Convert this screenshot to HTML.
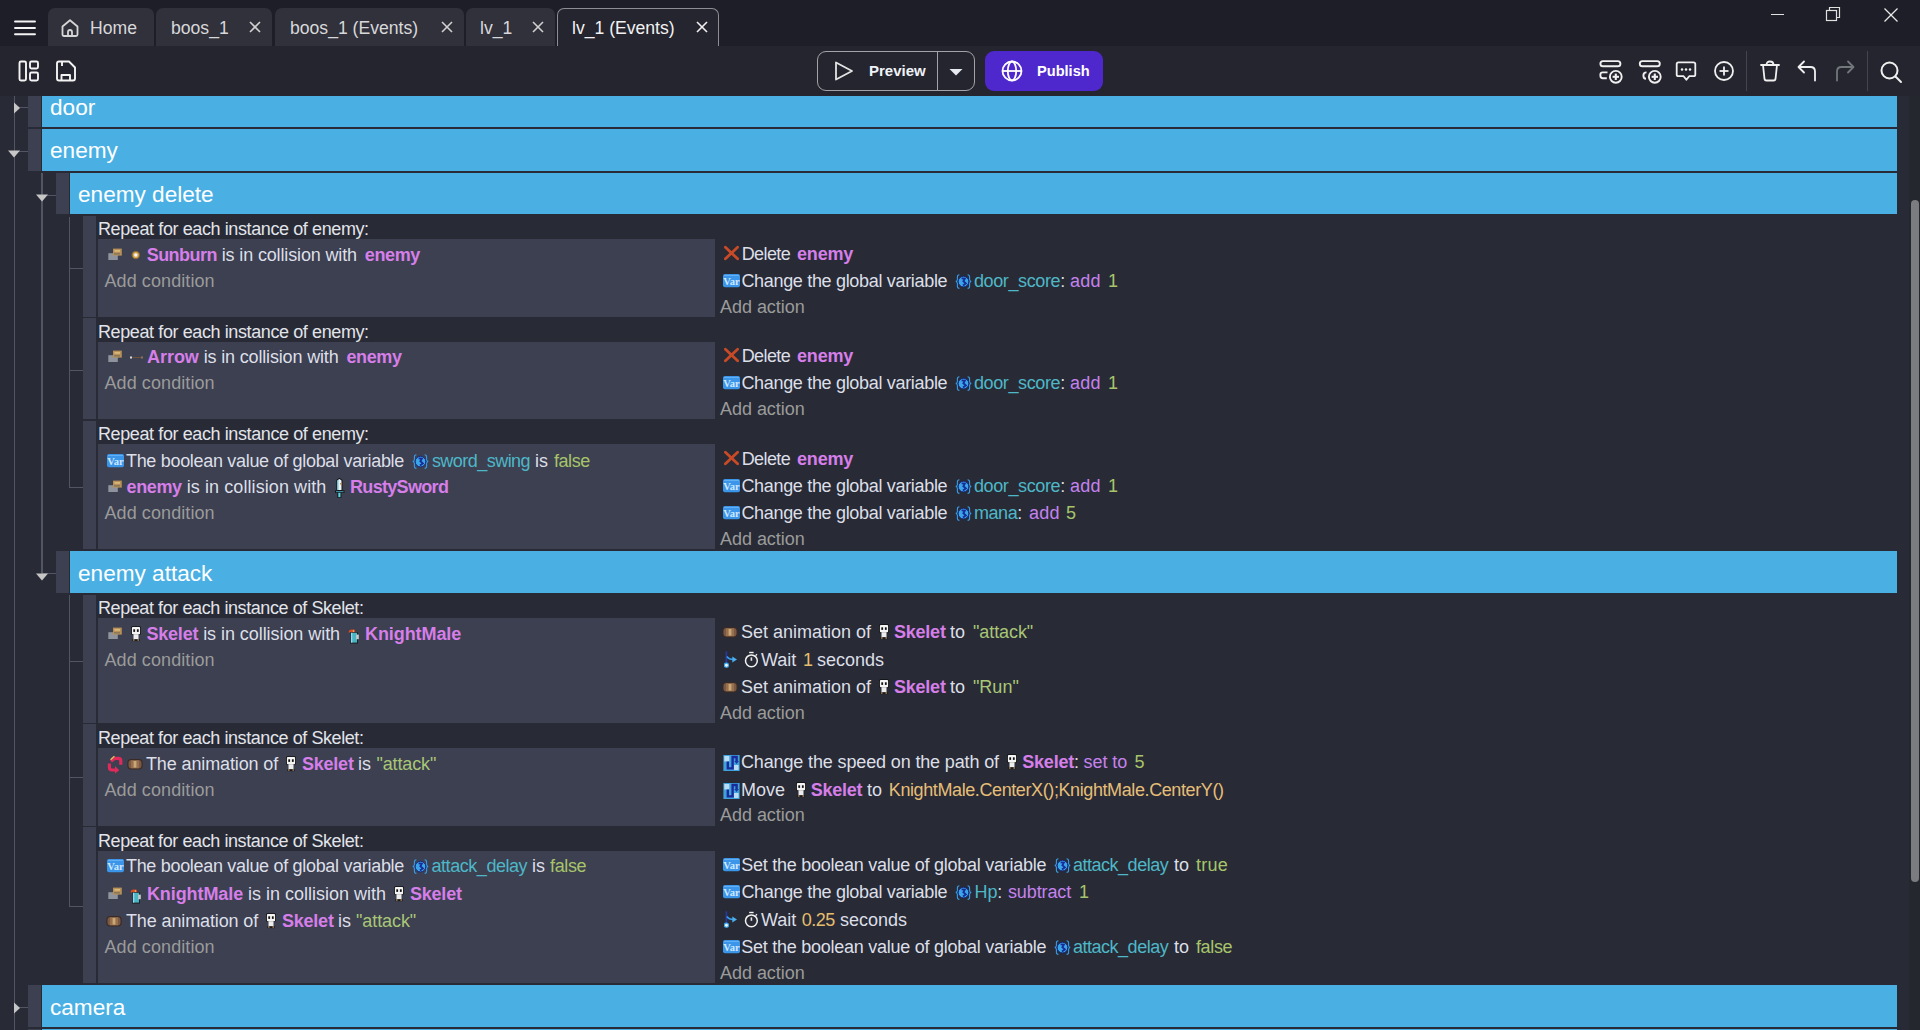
<!DOCTYPE html><html><head><meta charset="utf-8"><title>GDevelop</title><style>
*{box-sizing:border-box;margin:0;padding:0}
html,body{width:1920px;height:1030px;overflow:hidden;background:#282b35;font-family:"Liberation Sans",sans-serif}
.a{position:absolute}
#title{left:0;top:0;width:1920px;height:46px;background:#1e1e28}
#tool{left:0;top:46px;width:1920px;height:50px;background:#25252f}
.tab{position:absolute;top:8px;height:38px;background:#31313b;border-radius:7px 7px 0 0;color:#d8d8da;font-size:17.6px;line-height:38px;white-space:pre}
.tab.act{background:#25252f;border:1px solid #8d8d93;border-bottom:none;color:#f2f2f2}
.x{position:absolute;top:13px}
#ev{left:0;top:96px;width:1920px;height:934px;overflow:hidden}
.grp{position:absolute;background:#4ab0e4;color:#fff;font-size:22.6px;white-space:pre}
.hd{position:absolute;background:#3c4050}
.vl{position:absolute;background:#525563;width:1px}
.hl{position:absolute;background:#525563;height:1px}
.cp{position:absolute;background:#3c4050}
.ln{position:absolute;font-size:18px;line-height:20px;white-space:pre;color:#dcdfe8}
.hdr{color:#e2e4ec}
.o{color:#d67ee9;font-weight:bold}
.v{color:#4eb7c8}
.op{color:#c582ef}
.n{color:#a7c46b}
.s{color:#a9c677}
.w{color:#e6bd6e}
.e{color:#e6be78}
.g{color:#9b9b9b}
.ic{display:inline-block;vertical-align:top;position:relative;height:20px}
.ic svg{position:absolute}
</style></head><body>
<div id="title" class="a">
<svg class="a" style="left:12px;top:16px" width="26" height="22" viewBox="0 0 26 22"><g stroke="#f4f4f4" stroke-width="1.9" stroke-linecap="round"><line x1="3" y1="5.5" x2="23" y2="5.5"/><line x1="3" y1="12" x2="23" y2="12"/><line x1="3" y1="18.3" x2="23" y2="18.3"/></g></svg>
<div class="tab" style="left:48px;width:106px">
<svg class="a" style="left:12px;top:10px" width="20" height="20" viewBox="0 0 20 20"><path d="M2.5 8.5 L10 2.2 L17.5 8.5 V16.5 Q17.5 18 16 18 H4 Q2.5 18 2.5 16.5 Z" fill="none" stroke="#d6d6d6" stroke-width="1.8" stroke-linejoin="round"/><path d="M8 18 V14 Q8 12 10 12 Q12 12 12 14 V18" fill="none" stroke="#d6d6d6" stroke-width="1.8"/></svg>
<span class="a" style="left:42px;top:1px">Home</span>
</div>
<div class="tab" style="left:156px;width:116px">
<span class="a" style="left:15px;top:1px">boos_1</span>
</div>
<svg class="a" style="left:248px;top:20px" width="14" height="14" viewBox="0 0 14 14"><g stroke="#d0d0d0" stroke-width="1.6"><line x1="2" y1="2" x2="12" y2="12"/><line x1="12" y1="2" x2="2" y2="12"/></g></svg>
<div class="tab" style="left:275px;width:189px">
<span class="a" style="left:15px;top:1px">boos_1 (Events)</span>
</div>
<svg class="a" style="left:440px;top:20px" width="14" height="14" viewBox="0 0 14 14"><g stroke="#d0d0d0" stroke-width="1.6"><line x1="2" y1="2" x2="12" y2="12"/><line x1="12" y1="2" x2="2" y2="12"/></g></svg>
<div class="tab" style="left:466px;width:89px">
<span class="a" style="left:14px;top:1px">lv_1</span>
</div>
<svg class="a" style="left:531px;top:20px" width="14" height="14" viewBox="0 0 14 14"><g stroke="#d0d0d0" stroke-width="1.6"><line x1="2" y1="2" x2="12" y2="12"/><line x1="12" y1="2" x2="2" y2="12"/></g></svg>
<div class="tab act" style="left:557px;width:162px">
<span class="a" style="left:14px;top:0px">lv_1 (Events)</span>
</div>
<svg class="a" style="left:695px;top:20px" width="14" height="14" viewBox="0 0 14 14"><g stroke="#f0f0f0" stroke-width="1.6"><line x1="2" y1="2" x2="12" y2="12"/><line x1="12" y1="2" x2="2" y2="12"/></g></svg>
<svg class="a" style="left:1770px;top:8px" width="16" height="14"><line x1="1" y1="6.5" x2="14" y2="6.5" stroke="#e0e0e0" stroke-width="1"/></svg>
<svg class="a" style="left:1825px;top:6px" width="16" height="16"><rect x="1.5" y="4.5" width="10" height="10" fill="none" stroke="#e0e0e0" stroke-width="1.2"/><path d="M4.5 4.5 V1.5 H14.5 V11.5 H11.5" fill="none" stroke="#e0e0e0" stroke-width="1.2"/></svg>
<svg class="a" style="left:1883px;top:7px" width="16" height="16"><g stroke="#e8e8e8" stroke-width="1.3"><line x1="1.5" y1="1.5" x2="14.5" y2="14.5"/><line x1="14.5" y1="1.5" x2="1.5" y2="14.5"/></g></svg>
</div>
<div id="tool" class="a">
<svg class="a" style="left:17px;top:13px" width="24" height="24" viewBox="0 0 24 24"><g fill="none" stroke="#f4f4f4" stroke-width="1.9"><rect x="2.5" y="2.5" width="6.5" height="19" rx="1.5"/><rect x="13" y="2.5" width="8" height="7" rx="1.5"/><rect x="13" y="13.5" width="8" height="8" rx="1.5"/></g></svg>
<svg class="a" style="left:54px;top:13px" width="24" height="24" viewBox="0 0 24 24"><g fill="none" stroke="#f4f4f4" stroke-width="1.9" stroke-linejoin="round"><path d="M3 4.5 Q3 2.5 5 2.5 H15 L21 8.5 V19.5 Q21 21.5 19 21.5 H5 Q3 21.5 3 19.5 Z"/><path d="M8 2.5 V7"/><path d="M7.5 21.5 V16 H16 V21.5"/></g></svg>
<div class="a" style="left:817px;top:5px;width:158px;height:40px;border:1.3px solid #a2a2a8;border-radius:9px"></div>
<div class="a" style="left:937px;top:5px;width:1.3px;height:40px;background:#a2a2a8"></div>
<svg class="a" style="left:833px;top:14px" width="22" height="22" viewBox="0 0 22 22"><path d="M3 2.5 L19 11 L3 19.5 Z" fill="none" stroke="#e4e4e4" stroke-width="1.8" stroke-linejoin="round"/></svg>
<span class="a" style="left:869px;top:16px;font-size:15px;font-weight:bold;color:#f0f2f8;line-height:18px">Preview</span>
<svg class="a" style="left:948px;top:21px" width="16" height="10"><path d="M1.5 2 H14.5 L8 8.5 Z" fill="#e8eaf2"/></svg>
<div class="a" style="left:985px;top:5px;width:118px;height:40px;background:#4f28cd;border-radius:9px"></div>
<svg class="a" style="left:1000px;top:14px" width="24" height="22" viewBox="0 0 24 22"><g fill="none" stroke="#fff" stroke-width="1.8"><circle cx="12" cy="11" r="9.5"/><ellipse cx="12" cy="11" rx="4.2" ry="9.5"/><line x1="2.5" y1="11" x2="21.5" y2="11"/></g></svg>
<span class="a" style="left:1037px;top:16px;font-size:14.6px;font-weight:bold;color:#ffffff;line-height:18px">Publish</span>
<svg class="a" style="left:1597px;top:12px" width="28" height="28" viewBox="0 0 28 28"><g fill="none" stroke="#f0f0f0" stroke-width="1.9"><rect x="3.4" y="3.1" width="20" height="5.2" rx="2.6"/><path d="M9.8 20.2 H5.8 Q3.4 20.2 3.4 17.8 V16.6 Q3.4 14.4 5.8 14.4 H10.5"/><circle cx="18.8" cy="18.8" r="5.9"/></g><g stroke="#f0f0f0" stroke-width="2.1"><line x1="18.8" y1="15.6" x2="18.8" y2="22"/><line x1="15.6" y1="18.8" x2="22" y2="18.8"/></g></svg>
<svg class="a" style="left:1637px;top:12px" width="28" height="28" viewBox="0 0 28 28"><g fill="none" stroke="#f0f0f0" stroke-width="1.9"><rect x="2.8" y="3.1" width="20" height="5.2" rx="2.6"/><path d="M9.5 14.4 Q6.4 14.4 6.4 17.4 Q6.4 20.6 9 20.8"/><circle cx="17.8" cy="18.8" r="5.9"/></g><g stroke="#f0f0f0" stroke-width="2.1"><line x1="17.8" y1="15.6" x2="17.8" y2="22"/><line x1="14.6" y1="18.8" x2="21" y2="18.8"/></g></svg>
<svg class="a" style="left:1675px;top:13px" width="24" height="24" viewBox="0 0 24 24"><g fill="none" stroke="#f0f0f0" stroke-width="1.8" stroke-linejoin="round"><path d="M3.5 3.3 H18.5 Q20.3 3.3 20.3 5.1 V15.4 Q20.3 17.2 18.5 17.2 H14.2 L11.4 20.8 L8.6 17.2 H3.5 Q1.7 17.2 1.7 15.4 V5.1 Q1.7 3.3 3.5 3.3 Z"/></g><g fill="#f0f0f0"><circle cx="7" cy="10.6" r="1.25"/><circle cx="11" cy="10.6" r="1.25"/><circle cx="15" cy="10.6" r="1.25"/></g></svg>
<svg class="a" style="left:1712px;top:13px" width="24" height="24" viewBox="0 0 24 24"><g fill="none" stroke="#f0f0f0" stroke-width="1.8"><circle cx="12" cy="12" r="9"/><line x1="12" y1="7.5" x2="12" y2="16.5"/><line x1="7.5" y1="12" x2="16.5" y2="12"/></g></svg>
<div class="a" style="left:1746px;top:5px;width:1px;height:40px;background:#44444e"></div>
<svg class="a" style="left:1758px;top:13px" width="24" height="24" viewBox="0 0 24 24"><g fill="none" stroke="#f0f0f0" stroke-width="1.8" stroke-linejoin="round" stroke-linecap="round"><path d="M3 6 H21"/><path d="M5 6 L6.5 20 Q6.8 21.5 8.3 21.5 H15.7 Q17.2 21.5 17.5 20 L19 6"/><path d="M8.5 6 Q8.5 2.5 12 2.5 Q15.5 2.5 15.5 6"/></g></svg>
<svg class="a" style="left:1795px;top:13px" width="24" height="24" viewBox="0 0 24 24"><g fill="none" stroke="#f0f0f0" stroke-width="1.8" stroke-linecap="round" stroke-linejoin="round"><path d="M20 21.5 V12.5 Q20 8 15.5 8 H4"/><path d="M9 2.5 L3.5 8 L9 13.5"/></g></svg>
<svg class="a" style="left:1833px;top:13px" width="24" height="24" viewBox="0 0 24 24"><g fill="none" stroke="#71777b" stroke-width="1.8" stroke-linecap="round" stroke-linejoin="round"><path d="M4 21.5 V12.5 Q4 8 8.5 8 H20"/><path d="M15 2.5 L20.5 8 L15 13.5"/></g></svg>
<div class="a" style="left:1867px;top:5px;width:1px;height:40px;background:#44444e"></div>
<svg class="a" style="left:1879px;top:13.5px" width="24" height="24" viewBox="0 0 24 24"><g fill="none" stroke="#f0f0f0" stroke-width="2" stroke-linecap="round"><circle cx="10.5" cy="10.5" r="8"/><line x1="16.5" y1="16.5" x2="22" y2="22"/></g></svg>
</div>
<div id="ev" class="a">
<div class="vl" style="left:14px;top:0px;width:1px;height:934px;"></div>
<div class="hl" style="left:14px;top:11px;width:14px;height:1px;"></div>
<svg class="a" style="left:13px;top:5.5px" width="8" height="12"><path d="M1 0.5 L7 6 L1 11.5 Z" fill="#c6c6c6"/></svg>
<div class="hl" style="left:14px;top:55px;width:14px;height:1px;"></div>
<svg class="a" style="left:8px;top:54px" width="12" height="8"><path d="M0 0.5 H12 L6 7.5 Z" fill="#c6c6c6"/></svg>
<div class="hl" style="left:14px;top:911px;width:14px;height:1px;"></div>
<svg class="a" style="left:13px;top:905.5px" width="8" height="12"><path d="M1 0.5 L7 6 L1 11.5 Z" fill="#c6c6c6"/></svg>
<div class="vl" style="left:41px;top:77px;width:1.5px;height:401px;"></div>
<div class="hl" style="left:42px;top:99px;width:14px;height:1px;"></div>
<svg class="a" style="left:36px;top:98px" width="12" height="8"><path d="M0 0.5 H12 L6 7.5 Z" fill="#c6c6c6"/></svg>
<div class="hl" style="left:42px;top:477px;width:14px;height:1px;"></div>
<svg class="a" style="left:36px;top:477px" width="12" height="8"><path d="M0 0.5 H12 L6 7.5 Z" fill="#c6c6c6"/></svg>
<div class="vl" style="left:69px;top:121px;width:1px;height:270px;"></div>
<div class="hl" style="left:69px;top:172px;width:14px;height:1px;"></div>
<div class="hl" style="left:69px;top:274px;width:14px;height:1px;"></div>
<div class="hl" style="left:69px;top:391px;width:14px;height:1px;"></div>
<div class="vl" style="left:69px;top:499px;width:1px;height:312px;"></div>
<div class="hl" style="left:69px;top:565px;width:14px;height:1px;"></div>
<div class="hl" style="left:69px;top:681px;width:14px;height:1px;"></div>
<div class="hl" style="left:69px;top:810px;width:14px;height:1px;"></div>
<div class="hd" style="left:83px;top:120px;width:13px;height:101px;"></div>
<div class="cp" style="left:98px;top:143px;width:617px;height:78px;"></div>
<div class="hd" style="left:83px;top:222px;width:13px;height:101px;"></div>
<div class="cp" style="left:98px;top:246px;width:617px;height:77px;"></div>
<div class="hd" style="left:83px;top:325px;width:13px;height:128px;"></div>
<div class="cp" style="left:98px;top:348px;width:617px;height:105px;"></div>
<div class="hd" style="left:83px;top:499px;width:13px;height:128px;"></div>
<div class="cp" style="left:98px;top:522px;width:617px;height:105px;"></div>
<div class="hd" style="left:83px;top:628px;width:13px;height:102px;"></div>
<div class="cp" style="left:98px;top:652px;width:617px;height:78px;"></div>
<div class="hd" style="left:83px;top:731px;width:13px;height:156px;"></div>
<div class="cp" style="left:98px;top:755px;width:617px;height:132px;"></div>
<div class="ln hdr" style="left:98px;top:122.8px"><span id="L0S0" style="letter-spacing:-0.396px">Repeat for each instance of enemy:</span></div>
<div class="ln " style="left:106px;top:148.8px"><span id="L1S0" class="ic" style="margin-left:2.00px;width:14px"><svg style="left:0px;top:0px" width="14" height="20" viewBox="0 0 14 20"><rect x="0.3" y="8.2" width="9.5" height="6.8" fill="#8f939d"/><rect x="5" y="3.6" width="8.8" height="7" fill="#b89058"/><rect x="6.5" y="5" width="5.5" height="1.8" fill="#d8b878"/><rect x="6" y="8" width="6" height="1.6" fill="#8a7a5a"/></svg></span><span id="L1S1" class="ic" style="margin-left:9.00px;width:10px"><svg style="left:0px;top:0px" width="10" height="20" viewBox="0 0 10 20"><circle cx="4.8" cy="10" r="4.2" fill="#8a6a3a"/><circle cx="4.8" cy="10" r="3.1" fill="#d8a850"/><circle cx="4.8" cy="10" r="1.7" fill="#f4f4ff"/></svg></span><span id="L1S2" class="o" style="margin-left:5.70px;letter-spacing:-0.543px">Sunburn</span><span id="L1S3" style="letter-spacing:-0.143px"> is in collision with </span><span id="L1S4" class="o" style="margin-left:3.01px;letter-spacing:-0.369px">enemy</span></div>
<div class="ln " style="left:106px;top:175.1px"><span id="L2S0" class="g" style="margin-left:-1.50px;letter-spacing:0.085px">Add condition</span></div>
<div class="ln " style="left:721px;top:147.9px"><span id="L3S0" class="ic" style="margin-left:2.50px;width:15px"><svg style="left:0px;top:0px" width="15" height="20" viewBox="0 0 15 20"><g stroke="#c94a26" stroke-width="2.8" stroke-linecap="round"><line x1="1.4" y1="3.2" x2="13.6" y2="14.8"/><line x1="13.6" y1="3.2" x2="1.4" y2="14.8"/></g></svg></span><span id="L3S1" style="margin-left:3.20px;letter-spacing:-0.600px">Delete </span><span id="L3S2" class="o" style="margin-left:2.46px;letter-spacing:-0.169px">enemy</span></div>
<div class="ln " style="left:721px;top:174.7px"><span id="L4S0" class="ic" style="margin-left:1.80px;width:17px"><svg style="left:0px;top:0px" width="17" height="20" viewBox="0 0 17 20"><rect x="0" y="3.1" width="17" height="13.2" rx="2" fill="#3b96ea"/><rect x="1" y="4" width="15" height="1" fill="#7ec0f8" opacity="0.6"/><text x="8.5" y="14" font-family="Liberation Serif" font-size="10.5" font-weight="bold" fill="#cfe8ff" text-anchor="middle">Var</text></svg></span><span id="L4S1" style="margin-left:1.60px;letter-spacing:-0.317px">Change the global variable </span><span id="L4S2" class="ic" style="margin-left:2.99px;width:17px"><svg style="left:0px;top:0px" width="17" height="20" viewBox="0 0 17 20"><path d="M4.4 3.8 Q2.4 3.8 2.4 6 V8.4 Q2.4 10.2 0.8 10.4 Q2.4 10.6 2.4 12.4 V15.2 Q2.4 17.4 4.4 17.4" fill="none" stroke="#3a9ae6" stroke-width="1.1"/><path d="M12.6 3.8 Q14.6 3.8 14.6 6 V8.4 Q14.6 10.2 16.2 10.4 Q14.6 10.6 14.6 12.4 V15.2 Q14.6 17.4 12.6 17.4" fill="none" stroke="#3a9ae6" stroke-width="1.1"/><circle cx="8.5" cy="10.6" r="5.3" fill="#3aa6e8" stroke="#14207a" stroke-width="0.9"/><path d="M6.6 7.4 L9.8 7.6 L8.4 10.2 L10.8 12.4 L8 14.4" fill="none" stroke="#1a2a98" stroke-width="1.9"/></svg></span><span id="L4S3" class="v" style="margin-left:2.00px;letter-spacing:-0.386px">door_score</span><span id="L4S4">: </span><span id="L4S5" class="op" style="margin-left:-0.22px;letter-spacing:0.218px">add</span><span id="L4S6"> </span><span id="L4S7" class="n" style="margin-left:2.30px">1</span></div>
<div class="ln " style="left:721px;top:200.9px"><span id="L5S0" class="g" style="margin-left:-1.00px;letter-spacing:-0.036px">Add action</span></div>
<div class="ln hdr" style="left:98px;top:225.8px"><span id="L6S0" style="letter-spacing:-0.396px">Repeat for each instance of enemy:</span></div>
<div class="ln " style="left:106px;top:251.4px"><span id="L7S0" class="ic" style="margin-left:2.00px;width:14px"><svg style="left:0px;top:0px" width="14" height="20" viewBox="0 0 14 20"><rect x="0.3" y="8.2" width="9.5" height="6.8" fill="#8f939d"/><rect x="5" y="3.6" width="8.8" height="7" fill="#b89058"/><rect x="6.5" y="5" width="5.5" height="1.8" fill="#d8b878"/><rect x="6" y="8" width="6" height="1.6" fill="#8a7a5a"/></svg></span><span id="L7S1" class="ic" style="margin-left:8.00px;width:13px"><svg style="left:0px;top:0px" width="13" height="20" viewBox="0 0 13 20"><line x1="0" y1="10.5" x2="13" y2="10.5" stroke="#6a5040" stroke-width="1.2"/><rect x="0" y="9.5" width="2" height="2" fill="#d8d8d8"/><rect x="11" y="9.5" width="2" height="2" fill="#8a7060"/></svg></span><span id="L7S2" class="o" style="margin-left:4.00px;letter-spacing:-0.043px">Arrow</span><span id="L7S3" style="letter-spacing:-0.157px"> is in collision with </span><span id="L7S4" class="o" style="margin-left:2.99px;letter-spacing:-0.369px">enemy</span></div>
<div class="ln " style="left:106px;top:277.1px"><span id="L8S0" class="g" style="margin-left:-1.50px;letter-spacing:0.085px">Add condition</span></div>
<div class="ln " style="left:721px;top:249.7px"><span id="L9S0" class="ic" style="margin-left:2.50px;width:15px"><svg style="left:0px;top:0px" width="15" height="20" viewBox="0 0 15 20"><g stroke="#c94a26" stroke-width="2.8" stroke-linecap="round"><line x1="1.4" y1="3.2" x2="13.6" y2="14.8"/><line x1="13.6" y1="3.2" x2="1.4" y2="14.8"/></g></svg></span><span id="L9S1" style="margin-left:3.20px;letter-spacing:-0.600px">Delete </span><span id="L9S2" class="o" style="margin-left:2.46px;letter-spacing:-0.169px">enemy</span></div>
<div class="ln " style="left:721px;top:276.9px"><span id="L10S0" class="ic" style="margin-left:1.80px;width:17px"><svg style="left:0px;top:0px" width="17" height="20" viewBox="0 0 17 20"><rect x="0" y="3.1" width="17" height="13.2" rx="2" fill="#3b96ea"/><rect x="1" y="4" width="15" height="1" fill="#7ec0f8" opacity="0.6"/><text x="8.5" y="14" font-family="Liberation Serif" font-size="10.5" font-weight="bold" fill="#cfe8ff" text-anchor="middle">Var</text></svg></span><span id="L10S1" style="margin-left:1.60px;letter-spacing:-0.317px">Change the global variable </span><span id="L10S2" class="ic" style="margin-left:2.99px;width:17px"><svg style="left:0px;top:0px" width="17" height="20" viewBox="0 0 17 20"><path d="M4.4 3.8 Q2.4 3.8 2.4 6 V8.4 Q2.4 10.2 0.8 10.4 Q2.4 10.6 2.4 12.4 V15.2 Q2.4 17.4 4.4 17.4" fill="none" stroke="#3a9ae6" stroke-width="1.1"/><path d="M12.6 3.8 Q14.6 3.8 14.6 6 V8.4 Q14.6 10.2 16.2 10.4 Q14.6 10.6 14.6 12.4 V15.2 Q14.6 17.4 12.6 17.4" fill="none" stroke="#3a9ae6" stroke-width="1.1"/><circle cx="8.5" cy="10.6" r="5.3" fill="#3aa6e8" stroke="#14207a" stroke-width="0.9"/><path d="M6.6 7.4 L9.8 7.6 L8.4 10.2 L10.8 12.4 L8 14.4" fill="none" stroke="#1a2a98" stroke-width="1.9"/></svg></span><span id="L10S3" class="v" style="margin-left:2.00px;letter-spacing:-0.386px">door_score</span><span id="L10S4">: </span><span id="L10S5" class="op" style="margin-left:-0.22px;letter-spacing:0.218px">add</span><span id="L10S6"> </span><span id="L10S7" class="n" style="margin-left:2.30px">1</span></div>
<div class="ln " style="left:721px;top:303.4px"><span id="L11S0" class="g" style="margin-left:-1.00px;letter-spacing:-0.036px">Add action</span></div>
<div class="ln hdr" style="left:98px;top:327.8px"><span id="L12S0" style="letter-spacing:-0.396px">Repeat for each instance of enemy:</span></div>
<div class="ln " style="left:106px;top:354.7px"><span id="L13S0" class="ic" style="margin-left:0.80px;width:17px"><svg style="left:0px;top:0px" width="17" height="20" viewBox="0 0 17 20"><rect x="0" y="3.1" width="17" height="13.2" rx="2" fill="#3b96ea"/><rect x="1" y="4" width="15" height="1" fill="#7ec0f8" opacity="0.6"/><text x="8.5" y="14" font-family="Liberation Serif" font-size="10.5" font-weight="bold" fill="#cfe8ff" text-anchor="middle">Var</text></svg></span><span id="L13S1" style="margin-left:2.20px;letter-spacing:-0.311px">The boolean value of global variable </span><span id="L13S2" class="ic" style="margin-left:3.00px;width:17px"><svg style="left:0px;top:0px" width="17" height="20" viewBox="0 0 17 20"><path d="M4.4 3.8 Q2.4 3.8 2.4 6 V8.4 Q2.4 10.2 0.8 10.4 Q2.4 10.6 2.4 12.4 V15.2 Q2.4 17.4 4.4 17.4" fill="none" stroke="#3a9ae6" stroke-width="1.1"/><path d="M12.6 3.8 Q14.6 3.8 14.6 6 V8.4 Q14.6 10.2 16.2 10.4 Q14.6 10.6 14.6 12.4 V15.2 Q14.6 17.4 12.6 17.4" fill="none" stroke="#3a9ae6" stroke-width="1.1"/><circle cx="8.5" cy="10.6" r="5.3" fill="#3aa6e8" stroke="#14207a" stroke-width="0.9"/><path d="M6.6 7.4 L9.8 7.6 L8.4 10.2 L10.8 12.4 L8 14.4" fill="none" stroke="#1a2a98" stroke-width="1.9"/></svg></span><span id="L13S3" class="v" style="margin-left:3.20px;letter-spacing:-0.532px">sword_swing</span><span id="L13S4"> is </span><span id="L13S5" class="n" style="margin-left:0.88px;letter-spacing:-0.446px">false</span></div>
<div class="ln " style="left:106px;top:380.8px"><span id="L14S0" class="ic" style="margin-left:2.00px;width:14px"><svg style="left:0px;top:0px" width="14" height="20" viewBox="0 0 14 20"><rect x="0.3" y="8.2" width="9.5" height="6.8" fill="#8f939d"/><rect x="5" y="3.6" width="8.8" height="7" fill="#b89058"/><rect x="6.5" y="5" width="5.5" height="1.8" fill="#d8b878"/><rect x="6" y="8" width="6" height="1.6" fill="#8a7a5a"/></svg></span><span id="L14S1" class="o" style="margin-left:4.50px;letter-spacing:-0.369px">enemy</span><span id="L14S2" style="letter-spacing:0.080px"> is in collision with </span><span id="L14S3" class="ic" style="margin-left:3.00px;width:10px"><svg style="left:0px;top:0px" width="10" height="22" viewBox="0 0 10 22"><path d="M1.4 13.7 V3 L4.4 0.8 L7.5 3 V13.7 Z" fill="#141418"/><path d="M2.4 13 V3.4 L4.4 1.9 L6.5 3.4 V13 Z" fill="#f2f2f2"/><path d="M2.4 13 V3.4 L3.6 2.5 V13 Z" fill="#6ad0ec"/><rect x="5" y="6" width="1.5" height="1.5" fill="#c08a4a"/><rect x="0" y="13.4" width="9.5" height="2.4" fill="#141418"/><rect x="1" y="14" width="7.5" height="1.2" fill="#3a8a9a"/><rect x="2.4" y="15.6" width="4" height="5.4" fill="#141418"/><rect x="3.3" y="15.8" width="2.2" height="4.4" fill="#5ad0e0"/></svg></span><span id="L14S4" class="o" style="margin-left:5.50px;letter-spacing:-0.682px">RustySword</span></div>
<div class="ln " style="left:106px;top:406.7px"><span id="L15S0" class="g" style="margin-left:-1.50px;letter-spacing:0.085px">Add condition</span></div>
<div class="ln " style="left:721px;top:353.0px"><span id="L16S0" class="ic" style="margin-left:2.50px;width:15px"><svg style="left:0px;top:0px" width="15" height="20" viewBox="0 0 15 20"><g stroke="#c94a26" stroke-width="2.8" stroke-linecap="round"><line x1="1.4" y1="3.2" x2="13.6" y2="14.8"/><line x1="13.6" y1="3.2" x2="1.4" y2="14.8"/></g></svg></span><span id="L16S1" style="margin-left:3.20px;letter-spacing:-0.600px">Delete </span><span id="L16S2" class="o" style="margin-left:2.46px;letter-spacing:-0.169px">enemy</span></div>
<div class="ln " style="left:721px;top:380.1px"><span id="L17S0" class="ic" style="margin-left:1.80px;width:17px"><svg style="left:0px;top:0px" width="17" height="20" viewBox="0 0 17 20"><rect x="0" y="3.1" width="17" height="13.2" rx="2" fill="#3b96ea"/><rect x="1" y="4" width="15" height="1" fill="#7ec0f8" opacity="0.6"/><text x="8.5" y="14" font-family="Liberation Serif" font-size="10.5" font-weight="bold" fill="#cfe8ff" text-anchor="middle">Var</text></svg></span><span id="L17S1" style="margin-left:1.60px;letter-spacing:-0.317px">Change the global variable </span><span id="L17S2" class="ic" style="margin-left:2.99px;width:17px"><svg style="left:0px;top:0px" width="17" height="20" viewBox="0 0 17 20"><path d="M4.4 3.8 Q2.4 3.8 2.4 6 V8.4 Q2.4 10.2 0.8 10.4 Q2.4 10.6 2.4 12.4 V15.2 Q2.4 17.4 4.4 17.4" fill="none" stroke="#3a9ae6" stroke-width="1.1"/><path d="M12.6 3.8 Q14.6 3.8 14.6 6 V8.4 Q14.6 10.2 16.2 10.4 Q14.6 10.6 14.6 12.4 V15.2 Q14.6 17.4 12.6 17.4" fill="none" stroke="#3a9ae6" stroke-width="1.1"/><circle cx="8.5" cy="10.6" r="5.3" fill="#3aa6e8" stroke="#14207a" stroke-width="0.9"/><path d="M6.6 7.4 L9.8 7.6 L8.4 10.2 L10.8 12.4 L8 14.4" fill="none" stroke="#1a2a98" stroke-width="1.9"/></svg></span><span id="L17S3" class="v" style="margin-left:2.00px;letter-spacing:-0.386px">door_score</span><span id="L17S4">: </span><span id="L17S5" class="op" style="margin-left:-0.22px;letter-spacing:0.218px">add</span><span id="L17S6"> </span><span id="L17S7" class="n" style="margin-left:2.30px">1</span></div>
<div class="ln " style="left:721px;top:407.0px"><span id="L18S0" class="ic" style="margin-left:1.80px;width:17px"><svg style="left:0px;top:0px" width="17" height="20" viewBox="0 0 17 20"><rect x="0" y="3.1" width="17" height="13.2" rx="2" fill="#3b96ea"/><rect x="1" y="4" width="15" height="1" fill="#7ec0f8" opacity="0.6"/><text x="8.5" y="14" font-family="Liberation Serif" font-size="10.5" font-weight="bold" fill="#cfe8ff" text-anchor="middle">Var</text></svg></span><span id="L18S1" style="margin-left:1.60px;letter-spacing:-0.317px">Change the global variable </span><span id="L18S2" class="ic" style="margin-left:2.99px;width:17px"><svg style="left:0px;top:0px" width="17" height="20" viewBox="0 0 17 20"><path d="M4.4 3.8 Q2.4 3.8 2.4 6 V8.4 Q2.4 10.2 0.8 10.4 Q2.4 10.6 2.4 12.4 V15.2 Q2.4 17.4 4.4 17.4" fill="none" stroke="#3a9ae6" stroke-width="1.1"/><path d="M12.6 3.8 Q14.6 3.8 14.6 6 V8.4 Q14.6 10.2 16.2 10.4 Q14.6 10.6 14.6 12.4 V15.2 Q14.6 17.4 12.6 17.4" fill="none" stroke="#3a9ae6" stroke-width="1.1"/><circle cx="8.5" cy="10.6" r="5.3" fill="#3aa6e8" stroke="#14207a" stroke-width="0.9"/><path d="M6.6 7.4 L9.8 7.6 L8.4 10.2 L10.8 12.4 L8 14.4" fill="none" stroke="#1a2a98" stroke-width="1.9"/></svg></span><span id="L18S3" class="v" style="margin-left:2.00px;letter-spacing:-0.458px">mana</span><span id="L18S4">: </span><span id="L18S5" class="op" style="margin-left:1.78px;letter-spacing:0.218px">add</span><span id="L18S6"> </span><span id="L18S7" class="n" style="margin-left:1.30px">5</span></div>
<div class="ln " style="left:721px;top:432.9px"><span id="L19S0" class="g" style="margin-left:-1.00px;letter-spacing:-0.036px">Add action</span></div>
<div class="ln hdr" style="left:98px;top:501.8px"><span id="L20S0" style="letter-spacing:-0.419px">Repeat for each instance of Skelet:</span></div>
<div class="ln " style="left:106px;top:528.4px"><span id="L21S0" class="ic" style="margin-left:2.00px;width:14px"><svg style="left:0px;top:0px" width="14" height="20" viewBox="0 0 14 20"><rect x="0.3" y="8.2" width="9.5" height="6.8" fill="#8f939d"/><rect x="5" y="3.6" width="8.8" height="7" fill="#b89058"/><rect x="6.5" y="5" width="5.5" height="1.8" fill="#d8b878"/><rect x="6" y="8" width="6" height="1.6" fill="#8a7a5a"/></svg></span><span id="L21S1" class="ic" style="margin-left:9.00px;width:10px"><svg style="left:0px;top:0px" width="10" height="20" viewBox="0 0 10 20"><rect x="0" y="2.2" width="10" height="8.6" rx="1.5" fill="#101010"/><rect x="0.9" y="3" width="8.2" height="7.2" rx="1" fill="#f4f4f4"/><rect x="2.3" y="5.3" width="1.8" height="2.6" fill="#111"/><rect x="5.9" y="5.3" width="1.8" height="2.6" fill="#111"/><rect x="2.5" y="10.2" width="5" height="5.4" fill="#ececec"/><rect x="1.3" y="15.2" width="7.4" height="1.9" fill="#1a1a1a"/><rect x="2" y="15.4" width="1.6" height="1.2" fill="#c09a6a"/><rect x="6.4" y="15.4" width="1.6" height="1.2" fill="#c09a6a"/></svg></span><span id="L21S2" class="o" style="margin-left:5.50px;letter-spacing:-0.224px">Skelet</span><span id="L21S3" style="letter-spacing:-0.058px"> is in collision with </span><span id="L21S4" class="ic" style="margin-left:3.02px;width:11px"><svg style="left:0px;top:0px" width="11" height="20" viewBox="0 0 11 20"><path d="M0.7 8 Q0.7 5.4 3.5 5.4 H6.5 L7.4 8.4 H0.7 Z" fill="#d84a26"/><circle cx="5.4" cy="7" r="0.8" fill="#f0d070"/><rect x="2" y="8.4" width="8" height="11.1" fill="#17171c"/><rect x="2.9" y="8.8" width="6.2" height="9.8" fill="#4ab4c0"/><rect x="2.9" y="8.8" width="1.4" height="9.8" fill="#90d8f8"/><rect x="8.2" y="10.6" width="2.6" height="4.6" fill="#c8cad2"/></svg></span><span id="L21S5" class="o" style="margin-left:6.00px;letter-spacing:-0.080px">KnightMale</span></div>
<div class="ln " style="left:106px;top:553.9px"><span id="L22S0" class="g" style="margin-left:-1.50px;letter-spacing:0.085px">Add condition</span></div>
<div class="ln " style="left:721px;top:526.4px"><span id="L23S0" class="ic" style="margin-left:1.30px;width:16px"><svg style="left:0px;top:0px" width="16" height="20" viewBox="0 0 16 20"><rect x="0.3" y="5" width="15.4" height="10.6" rx="4" fill="#3a2a26"/><rect x="1.5" y="6" width="13" height="8.6" rx="3" fill="#7a5a44"/><rect x="4" y="6.5" width="8" height="7.6" fill="#98704e"/><rect x="6.6" y="7" width="2.8" height="6.6" fill="#c8a878"/></svg></span><span id="L23S1" style="margin-left:2.70px;letter-spacing:-0.006px">Set animation of </span><span id="L23S2" class="ic" style="margin-left:3.02px;width:10px"><svg style="left:0px;top:0px" width="10" height="20" viewBox="0 0 10 20"><rect x="0" y="2.2" width="10" height="8.6" rx="1.5" fill="#101010"/><rect x="0.9" y="3" width="8.2" height="7.2" rx="1" fill="#f4f4f4"/><rect x="2.3" y="5.3" width="1.8" height="2.6" fill="#111"/><rect x="5.9" y="5.3" width="1.8" height="2.6" fill="#111"/><rect x="2.5" y="10.2" width="5" height="5.4" fill="#ececec"/><rect x="1.3" y="15.2" width="7.4" height="1.9" fill="#1a1a1a"/><rect x="2" y="15.4" width="1.6" height="1.2" fill="#c09a6a"/><rect x="6.4" y="15.4" width="1.6" height="1.2" fill="#c09a6a"/></svg></span><span id="L23S3" class="o" style="margin-left:5.00px;letter-spacing:-0.224px">Skelet</span><span id="L23S4" style="margin-left:-0.70px"> to </span><span id="L23S5" class="s" style="margin-left:2.98px;letter-spacing:-0.077px">"attack"</span></div>
<div class="ln " style="left:721px;top:553.9px"><span id="L24S0" class="ic" style="margin-left:2.50px;width:14px"><svg style="left:0px;top:0px" width="14" height="20" viewBox="0 0 14 20"><line x1="2.4" y1="1.3" x2="2.4" y2="14" stroke="#2438a8" stroke-width="1.6"/><circle cx="2.4" cy="15.2" r="2.1" fill="#f0f8ff" stroke="#3aa8f0" stroke-width="1.1"/><path d="M2.8 6.5 Q5 9.5 9 9.5" fill="none" stroke="#3a9ae8" stroke-width="1.4"/><path d="M8.3 6.6 L13 9.6 L8.3 12.4 Z" fill="#4ab0f0"/></svg></span><span id="L24S1" class="ic" style="margin-left:6.00px;width:16px"><svg style="left:0px;top:0px" width="16" height="20" viewBox="0 0 16 20"><circle cx="7.4" cy="10.8" r="5.9" fill="none" stroke="#f2f2f2" stroke-width="1.5"/><line x1="7.4" y1="10.8" x2="7.4" y2="7.4" stroke="#e8e8e8" stroke-width="1.6"/><line x1="5.2" y1="2.5" x2="9.6" y2="2.5" stroke="#f2f2f2" stroke-width="1.4"/><line x1="11.6" y1="5.6" x2="13" y2="4.2" stroke="#f2f2f2" stroke-width="1.3"/></svg></span><span id="L24S2" style="margin-left:1.50px">Wait </span><span id="L24S3" class="w" style="margin-left:1.66px">1</span><span id="L24S4" style="margin-left:-1.02px"> seconds</span></div>
<div class="ln " style="left:721px;top:581.1px"><span id="L25S0" class="ic" style="margin-left:1.30px;width:16px"><svg style="left:0px;top:0px" width="16" height="20" viewBox="0 0 16 20"><rect x="0.3" y="5" width="15.4" height="10.6" rx="4" fill="#3a2a26"/><rect x="1.5" y="6" width="13" height="8.6" rx="3" fill="#7a5a44"/><rect x="4" y="6.5" width="8" height="7.6" fill="#98704e"/><rect x="6.6" y="7" width="2.8" height="6.6" fill="#c8a878"/></svg></span><span id="L25S1" style="margin-left:2.70px;letter-spacing:-0.006px">Set animation of </span><span id="L25S2" class="ic" style="margin-left:3.02px;width:10px"><svg style="left:0px;top:0px" width="10" height="20" viewBox="0 0 10 20"><rect x="0" y="2.2" width="10" height="8.6" rx="1.5" fill="#101010"/><rect x="0.9" y="3" width="8.2" height="7.2" rx="1" fill="#f4f4f4"/><rect x="2.3" y="5.3" width="1.8" height="2.6" fill="#111"/><rect x="5.9" y="5.3" width="1.8" height="2.6" fill="#111"/><rect x="2.5" y="10.2" width="5" height="5.4" fill="#ececec"/><rect x="1.3" y="15.2" width="7.4" height="1.9" fill="#1a1a1a"/><rect x="2" y="15.4" width="1.6" height="1.2" fill="#c09a6a"/><rect x="6.4" y="15.4" width="1.6" height="1.2" fill="#c09a6a"/></svg></span><span id="L25S3" class="o" style="margin-left:5.00px;letter-spacing:-0.224px">Skelet</span><span id="L25S4" style="margin-left:-0.70px"> to </span><span id="L25S5" class="s" style="margin-left:2.98px">"Run"</span></div>
<div class="ln " style="left:721px;top:606.8px"><span id="L26S0" class="g" style="margin-left:-1.00px;letter-spacing:-0.036px">Add action</span></div>
<div class="ln hdr" style="left:98px;top:631.8px"><span id="L27S0" style="letter-spacing:-0.419px">Repeat for each instance of Skelet:</span></div>
<div class="ln " style="left:106px;top:658.1px"><span id="L28S0" class="ic" style="margin-left:0.60px;width:16px"><svg style="left:0px;top:0px" width="16" height="20" viewBox="0 0 16 20"><path d="M4 7.2 L7.6 4.4 H11.4 Q13.8 4.4 13.8 7 V10.8" fill="none" stroke="#e02a5c" stroke-width="3.2" stroke-linejoin="round"/><path d="M3.6 5.8 L7.4 2.2" stroke="#e0c060" stroke-width="1.4"/><path d="M2.4 9.6 V13.2 Q2.4 16 5.2 16 H8.4" fill="none" stroke="#e02a5c" stroke-width="3.2"/><path d="M8 12 L12.2 16.2 L8 19.6 Z" fill="#e02a5c"/></svg></span><span id="L28S1" class="ic" style="margin-left:4.40px;width:16px"><svg style="left:0px;top:0px" width="16" height="20" viewBox="0 0 16 20"><rect x="0.3" y="5" width="15.4" height="10.6" rx="4" fill="#3a2a26"/><rect x="1.5" y="6" width="13" height="8.6" rx="3" fill="#7a5a44"/><rect x="4" y="6.5" width="8" height="7.6" fill="#98704e"/><rect x="6.6" y="7" width="2.8" height="6.6" fill="#c8a878"/></svg></span><span id="L28S2" style="margin-left:3.00px;letter-spacing:-0.122px">The animation of </span><span id="L28S3" class="ic" style="margin-left:2.98px;width:10px"><svg style="left:0px;top:0px" width="10" height="20" viewBox="0 0 10 20"><rect x="0" y="2.2" width="10" height="8.6" rx="1.5" fill="#101010"/><rect x="0.9" y="3" width="8.2" height="7.2" rx="1" fill="#f4f4f4"/><rect x="2.3" y="5.3" width="1.8" height="2.6" fill="#111"/><rect x="5.9" y="5.3" width="1.8" height="2.6" fill="#111"/><rect x="2.5" y="10.2" width="5" height="5.4" fill="#ececec"/><rect x="1.3" y="15.2" width="7.4" height="1.9" fill="#1a1a1a"/><rect x="2" y="15.4" width="1.6" height="1.2" fill="#c09a6a"/><rect x="6.4" y="15.4" width="1.6" height="1.2" fill="#c09a6a"/></svg></span><span id="L28S4" class="o" style="margin-left:6.00px;letter-spacing:-0.224px">Skelet</span><span id="L28S5" style="margin-left:-0.70px"> is </span><span id="L28S6" class="s" style="margin-left:0.48px;letter-spacing:-0.139px">"attack"</span></div>
<div class="ln " style="left:106px;top:683.6px"><span id="L29S0" class="g" style="margin-left:-1.50px;letter-spacing:0.085px">Add condition</span></div>
<div class="ln " style="left:721px;top:655.9px"><span id="L30S0" class="ic" style="margin-left:1.50px;width:17px"><svg style="left:0px;top:0px" width="17" height="20" viewBox="0 0 17 20"><rect x="0.4" y="3" width="16.2" height="16" fill="#3fa2dc"/><rect x="1.3" y="4" width="5" height="5.5" fill="#b8dcf4"/><path d="M4.8 9.5 V16.4 H9.6 V5 H13.6 V9" fill="none" stroke="#1a2a9a" stroke-width="2.4"/><path d="M11.2 9 H16 L13.6 12 Z" fill="#1a3aa8"/><rect x="11" y="13" width="4.6" height="5" fill="#b8dcf4"/></svg></span><span id="L30S1" style="margin-left:1.50px;letter-spacing:-0.138px">Change the speed on the path of </span><span id="L30S2" class="ic" style="margin-left:2.99px;width:10px"><svg style="left:0px;top:0px" width="10" height="20" viewBox="0 0 10 20"><rect x="0" y="2.2" width="10" height="8.6" rx="1.5" fill="#101010"/><rect x="0.9" y="3" width="8.2" height="7.2" rx="1" fill="#f4f4f4"/><rect x="2.3" y="5.3" width="1.8" height="2.6" fill="#111"/><rect x="5.9" y="5.3" width="1.8" height="2.6" fill="#111"/><rect x="2.5" y="10.2" width="5" height="5.4" fill="#ececec"/><rect x="1.3" y="15.2" width="7.4" height="1.9" fill="#1a1a1a"/><rect x="2" y="15.4" width="1.6" height="1.2" fill="#c09a6a"/><rect x="6.4" y="15.4" width="1.6" height="1.2" fill="#c09a6a"/></svg></span><span id="L30S3" class="o" style="margin-left:5.50px;letter-spacing:-0.224px">Skelet</span><span id="L30S4">: </span><span id="L30S5" class="op" style="margin-left:-0.42px;letter-spacing:-0.072px">set to</span><span id="L30S6"> </span><span id="L30S7" class="n" style="margin-left:2.19px">5</span></div>
<div class="ln " style="left:721px;top:683.8px"><span id="L31S0" class="ic" style="margin-left:1.50px;width:17px"><svg style="left:0px;top:0px" width="17" height="20" viewBox="0 0 17 20"><rect x="0.4" y="3" width="16.2" height="16" fill="#3fa2dc"/><rect x="1.3" y="4" width="5" height="5.5" fill="#b8dcf4"/><path d="M4.8 9.5 V16.4 H9.6 V5 H13.6 V9" fill="none" stroke="#1a2a9a" stroke-width="2.4"/><path d="M11.2 9 H16 L13.6 12 Z" fill="#1a3aa8"/><rect x="11" y="13" width="4.6" height="5" fill="#b8dcf4"/></svg></span><span id="L31S1" style="margin-left:1.50px">Move </span><span id="L31S2" class="ic" style="margin-left:5.57px;width:10px"><svg style="left:0px;top:0px" width="10" height="20" viewBox="0 0 10 20"><rect x="0" y="2.2" width="10" height="8.6" rx="1.5" fill="#101010"/><rect x="0.9" y="3" width="8.2" height="7.2" rx="1" fill="#f4f4f4"/><rect x="2.3" y="5.3" width="1.8" height="2.6" fill="#111"/><rect x="5.9" y="5.3" width="1.8" height="2.6" fill="#111"/><rect x="2.5" y="10.2" width="5" height="5.4" fill="#ececec"/><rect x="1.3" y="15.2" width="7.4" height="1.9" fill="#1a1a1a"/><rect x="2" y="15.4" width="1.6" height="1.2" fill="#c09a6a"/><rect x="6.4" y="15.4" width="1.6" height="1.2" fill="#c09a6a"/></svg></span><span id="L31S3" class="o" style="margin-left:5.10px;letter-spacing:-0.224px">Skelet</span><span id="L31S4" style="margin-left:-0.40px"> to </span><span id="L31S5" class="e" style="margin-left:1.78px;letter-spacing:-0.399px">KnightMale.CenterX();KnightMale.CenterY()</span></div>
<div class="ln " style="left:721px;top:709.4px"><span id="L32S0" class="g" style="margin-left:-1.00px;letter-spacing:-0.036px">Add action</span></div>
<div class="ln hdr" style="left:98px;top:734.8px"><span id="L33S0" style="letter-spacing:-0.419px">Repeat for each instance of Skelet:</span></div>
<div class="ln " style="left:106px;top:760.4px"><span id="L34S0" class="ic" style="margin-left:0.80px;width:17px"><svg style="left:0px;top:0px" width="17" height="20" viewBox="0 0 17 20"><rect x="0" y="3.1" width="17" height="13.2" rx="2" fill="#3b96ea"/><rect x="1" y="4" width="15" height="1" fill="#7ec0f8" opacity="0.6"/><text x="8.5" y="14" font-family="Liberation Serif" font-size="10.5" font-weight="bold" fill="#cfe8ff" text-anchor="middle">Var</text></svg></span><span id="L34S1" style="margin-left:2.20px;letter-spacing:-0.311px">The boolean value of global variable </span><span id="L34S2" class="ic" style="margin-left:3.00px;width:17px"><svg style="left:0px;top:0px" width="17" height="20" viewBox="0 0 17 20"><path d="M4.4 3.8 Q2.4 3.8 2.4 6 V8.4 Q2.4 10.2 0.8 10.4 Q2.4 10.6 2.4 12.4 V15.2 Q2.4 17.4 4.4 17.4" fill="none" stroke="#3a9ae6" stroke-width="1.1"/><path d="M12.6 3.8 Q14.6 3.8 14.6 6 V8.4 Q14.6 10.2 16.2 10.4 Q14.6 10.6 14.6 12.4 V15.2 Q14.6 17.4 12.6 17.4" fill="none" stroke="#3a9ae6" stroke-width="1.1"/><circle cx="8.5" cy="10.6" r="5.3" fill="#3aa6e8" stroke="#14207a" stroke-width="0.9"/><path d="M6.6 7.4 L9.8 7.6 L8.4 10.2 L10.8 12.4 L8 14.4" fill="none" stroke="#1a2a98" stroke-width="1.9"/></svg></span><span id="L34S3" class="v" style="margin-left:2.80px;letter-spacing:-0.448px">attack_delay</span><span id="L34S4" style="margin-left:-0.20px"> is </span><span id="L34S5" class="n" style="margin-left:-0.02px;letter-spacing:-0.366px">false</span></div>
<div class="ln " style="left:106px;top:787.9px"><span id="L35S0" class="ic" style="margin-left:2.00px;width:14px"><svg style="left:0px;top:0px" width="14" height="20" viewBox="0 0 14 20"><rect x="0.3" y="8.2" width="9.5" height="6.8" fill="#8f939d"/><rect x="5" y="3.6" width="8.8" height="7" fill="#b89058"/><rect x="6.5" y="5" width="5.5" height="1.8" fill="#d8b878"/><rect x="6" y="8" width="6" height="1.6" fill="#8a7a5a"/></svg></span><span id="L35S1" class="ic" style="margin-left:8.00px;width:11px"><svg style="left:0px;top:0px" width="11" height="20" viewBox="0 0 11 20"><path d="M0.7 8 Q0.7 5.4 3.5 5.4 H6.5 L7.4 8.4 H0.7 Z" fill="#d84a26"/><circle cx="5.4" cy="7" r="0.8" fill="#f0d070"/><rect x="2" y="8.4" width="8" height="11.1" fill="#17171c"/><rect x="2.9" y="8.8" width="6.2" height="9.8" fill="#4ab4c0"/><rect x="2.9" y="8.8" width="1.4" height="9.8" fill="#90d8f8"/><rect x="8.2" y="10.6" width="2.6" height="4.6" fill="#c8cad2"/></svg></span><span id="L35S2" class="o" style="margin-left:5.90px;letter-spacing:-0.080px">KnightMale</span><span id="L35S3" style="margin-left:-0.10px;letter-spacing:-0.003px"> is in collision with </span><span id="L35S4" class="ic" style="margin-left:3.00px;width:10px"><svg style="left:0px;top:0px" width="10" height="20" viewBox="0 0 10 20"><rect x="0" y="2.2" width="10" height="8.6" rx="1.5" fill="#101010"/><rect x="0.9" y="3" width="8.2" height="7.2" rx="1" fill="#f4f4f4"/><rect x="2.3" y="5.3" width="1.8" height="2.6" fill="#111"/><rect x="5.9" y="5.3" width="1.8" height="2.6" fill="#111"/><rect x="2.5" y="10.2" width="5" height="5.4" fill="#ececec"/><rect x="1.3" y="15.2" width="7.4" height="1.9" fill="#1a1a1a"/><rect x="2" y="15.4" width="1.6" height="1.2" fill="#c09a6a"/><rect x="6.4" y="15.4" width="1.6" height="1.2" fill="#c09a6a"/></svg></span><span id="L35S5" class="o" style="margin-left:6.00px;letter-spacing:-0.224px">Skelet</span></div>
<div class="ln " style="left:106px;top:814.9px"><span id="L36S0" class="ic" style="width:16px"><svg style="left:0px;top:0px" width="16" height="20" viewBox="0 0 16 20"><rect x="0.3" y="5" width="15.4" height="10.6" rx="4" fill="#3a2a26"/><rect x="1.5" y="6" width="13" height="8.6" rx="3" fill="#7a5a44"/><rect x="4" y="6.5" width="8" height="7.6" fill="#98704e"/><rect x="6.6" y="7" width="2.8" height="6.6" fill="#c8a878"/></svg></span><span id="L36S1" style="margin-left:4.00px;letter-spacing:-0.122px">The animation of </span><span id="L36S2" class="ic" style="margin-left:2.98px;width:10px"><svg style="left:0px;top:0px" width="10" height="20" viewBox="0 0 10 20"><rect x="0" y="2.2" width="10" height="8.6" rx="1.5" fill="#101010"/><rect x="0.9" y="3" width="8.2" height="7.2" rx="1" fill="#f4f4f4"/><rect x="2.3" y="5.3" width="1.8" height="2.6" fill="#111"/><rect x="5.9" y="5.3" width="1.8" height="2.6" fill="#111"/><rect x="2.5" y="10.2" width="5" height="5.4" fill="#ececec"/><rect x="1.3" y="15.2" width="7.4" height="1.9" fill="#1a1a1a"/><rect x="2" y="15.4" width="1.6" height="1.2" fill="#c09a6a"/><rect x="6.4" y="15.4" width="1.6" height="1.2" fill="#c09a6a"/></svg></span><span id="L36S3" class="o" style="margin-left:6.00px;letter-spacing:-0.224px">Skelet</span><span id="L36S4" style="margin-left:-0.70px"> is </span><span id="L36S5" class="s" style="margin-left:-0.02px;letter-spacing:-0.077px">"attack"</span></div>
<div class="ln " style="left:106px;top:840.7px"><span id="L37S0" class="g" style="margin-left:-1.50px;letter-spacing:0.085px">Add condition</span></div>
<div class="ln " style="left:721px;top:759.0px"><span id="L38S0" class="ic" style="margin-left:1.80px;width:17px"><svg style="left:0px;top:0px" width="17" height="20" viewBox="0 0 17 20"><rect x="0" y="3.1" width="17" height="13.2" rx="2" fill="#3b96ea"/><rect x="1" y="4" width="15" height="1" fill="#7ec0f8" opacity="0.6"/><text x="8.5" y="14" font-family="Liberation Serif" font-size="10.5" font-weight="bold" fill="#cfe8ff" text-anchor="middle">Var</text></svg></span><span id="L38S1" style="margin-left:1.50px;letter-spacing:-0.257px">Set the boolean value of global variable </span><span id="L38S2" class="ic" style="margin-left:3.00px;width:17px"><svg style="left:0px;top:0px" width="17" height="20" viewBox="0 0 17 20"><path d="M4.4 3.8 Q2.4 3.8 2.4 6 V8.4 Q2.4 10.2 0.8 10.4 Q2.4 10.6 2.4 12.4 V15.2 Q2.4 17.4 4.4 17.4" fill="none" stroke="#3a9ae6" stroke-width="1.1"/><path d="M12.6 3.8 Q14.6 3.8 14.6 6 V8.4 Q14.6 10.2 16.2 10.4 Q14.6 10.6 14.6 12.4 V15.2 Q14.6 17.4 12.6 17.4" fill="none" stroke="#3a9ae6" stroke-width="1.1"/><circle cx="8.5" cy="10.6" r="5.3" fill="#3aa6e8" stroke="#14207a" stroke-width="0.9"/><path d="M6.6 7.4 L9.8 7.6 L8.4 10.2 L10.8 12.4 L8 14.4" fill="none" stroke="#1a2a98" stroke-width="1.9"/></svg></span><span id="L38S3" class="v" style="margin-left:2.00px;letter-spacing:-0.490px">attack_delay</span><span id="L38S4" style="margin-left:0.81px"> to </span><span id="L38S5" class="n" style="margin-left:1.98px;letter-spacing:0.292px">true</span></div>
<div class="ln " style="left:721px;top:786.1px"><span id="L39S0" class="ic" style="margin-left:1.80px;width:17px"><svg style="left:0px;top:0px" width="17" height="20" viewBox="0 0 17 20"><rect x="0" y="3.1" width="17" height="13.2" rx="2" fill="#3b96ea"/><rect x="1" y="4" width="15" height="1" fill="#7ec0f8" opacity="0.6"/><text x="8.5" y="14" font-family="Liberation Serif" font-size="10.5" font-weight="bold" fill="#cfe8ff" text-anchor="middle">Var</text></svg></span><span id="L39S1" style="margin-left:1.60px;letter-spacing:-0.317px">Change the global variable </span><span id="L39S2" class="ic" style="margin-left:2.99px;width:17px"><svg style="left:0px;top:0px" width="17" height="20" viewBox="0 0 17 20"><path d="M4.4 3.8 Q2.4 3.8 2.4 6 V8.4 Q2.4 10.2 0.8 10.4 Q2.4 10.6 2.4 12.4 V15.2 Q2.4 17.4 4.4 17.4" fill="none" stroke="#3a9ae6" stroke-width="1.1"/><path d="M12.6 3.8 Q14.6 3.8 14.6 6 V8.4 Q14.6 10.2 16.2 10.4 Q14.6 10.6 14.6 12.4 V15.2 Q14.6 17.4 12.6 17.4" fill="none" stroke="#3a9ae6" stroke-width="1.1"/><circle cx="8.5" cy="10.6" r="5.3" fill="#3aa6e8" stroke="#14207a" stroke-width="0.9"/><path d="M6.6 7.4 L9.8 7.6 L8.4 10.2 L10.8 12.4 L8 14.4" fill="none" stroke="#1a2a98" stroke-width="1.9"/></svg></span><span id="L39S3" class="v" style="margin-left:2.60px;letter-spacing:-0.158px">Hp</span><span id="L39S4">: </span><span id="L39S5" class="op" style="margin-left:0.68px;letter-spacing:-0.104px">subtract</span><span id="L39S6"> </span><span id="L39S7" class="n" style="margin-left:2.78px">1</span></div>
<div class="ln " style="left:721px;top:813.6px"><span id="L40S0" class="ic" style="margin-left:2.50px;width:14px"><svg style="left:0px;top:0px" width="14" height="20" viewBox="0 0 14 20"><line x1="2.4" y1="1.3" x2="2.4" y2="14" stroke="#2438a8" stroke-width="1.6"/><circle cx="2.4" cy="15.2" r="2.1" fill="#f0f8ff" stroke="#3aa8f0" stroke-width="1.1"/><path d="M2.8 6.5 Q5 9.5 9 9.5" fill="none" stroke="#3a9ae8" stroke-width="1.4"/><path d="M8.3 6.6 L13 9.6 L8.3 12.4 Z" fill="#4ab0f0"/></svg></span><span id="L40S1" class="ic" style="margin-left:6.00px;width:16px"><svg style="left:0px;top:0px" width="16" height="20" viewBox="0 0 16 20"><circle cx="7.4" cy="10.8" r="5.9" fill="none" stroke="#f2f2f2" stroke-width="1.5"/><line x1="7.4" y1="10.8" x2="7.4" y2="7.4" stroke="#e8e8e8" stroke-width="1.6"/><line x1="5.2" y1="2.5" x2="9.6" y2="2.5" stroke="#f2f2f2" stroke-width="1.4"/><line x1="11.6" y1="5.6" x2="13" y2="4.2" stroke="#f2f2f2" stroke-width="1.3"/></svg></span><span id="L40S2" style="margin-left:1.50px">Wait </span><span id="L40S3" class="w" style="margin-left:0.36px;letter-spacing:-0.462px">0.25</span><span id="L40S4" style="margin-left:0.11px"> seconds</span></div>
<div class="ln " style="left:721px;top:840.7px"><span id="L41S0" class="ic" style="margin-left:1.80px;width:17px"><svg style="left:0px;top:0px" width="17" height="20" viewBox="0 0 17 20"><rect x="0" y="3.1" width="17" height="13.2" rx="2" fill="#3b96ea"/><rect x="1" y="4" width="15" height="1" fill="#7ec0f8" opacity="0.6"/><text x="8.5" y="14" font-family="Liberation Serif" font-size="10.5" font-weight="bold" fill="#cfe8ff" text-anchor="middle">Var</text></svg></span><span id="L41S1" style="margin-left:1.50px;letter-spacing:-0.257px">Set the boolean value of global variable </span><span id="L41S2" class="ic" style="margin-left:3.00px;width:17px"><svg style="left:0px;top:0px" width="17" height="20" viewBox="0 0 17 20"><path d="M4.4 3.8 Q2.4 3.8 2.4 6 V8.4 Q2.4 10.2 0.8 10.4 Q2.4 10.6 2.4 12.4 V15.2 Q2.4 17.4 4.4 17.4" fill="none" stroke="#3a9ae6" stroke-width="1.1"/><path d="M12.6 3.8 Q14.6 3.8 14.6 6 V8.4 Q14.6 10.2 16.2 10.4 Q14.6 10.6 14.6 12.4 V15.2 Q14.6 17.4 12.6 17.4" fill="none" stroke="#3a9ae6" stroke-width="1.1"/><circle cx="8.5" cy="10.6" r="5.3" fill="#3aa6e8" stroke="#14207a" stroke-width="0.9"/><path d="M6.6 7.4 L9.8 7.6 L8.4 10.2 L10.8 12.4 L8 14.4" fill="none" stroke="#1a2a98" stroke-width="1.9"/></svg></span><span id="L41S3" class="v" style="margin-left:2.00px;letter-spacing:-0.490px">attack_delay</span><span id="L41S4" style="margin-left:0.81px"> to </span><span id="L41S5" class="n" style="margin-left:1.98px;letter-spacing:-0.366px">false</span></div>
<div class="ln " style="left:721px;top:866.9px"><span id="L42S0" class="g" style="margin-left:-1.00px;letter-spacing:-0.036px">Add action</span></div>
<div class="a" style="left:1909px;top:0;width:11px;height:934px;background:#25272f"></div>
<div class="a" style="left:1911px;top:104px;width:8px;height:682px;background:#7b7c80;border-radius:4px"></div>
<div class="hd" style="left:28px;top:-11px;width:13px;height:42px;"></div>
<div class="grp" style="left:42px;top:-11px;width:1855px;height:42px"><span class="a" style="left:8px;top:9.7px;line-height:26px">door</span></div>
<div class="hd" style="left:28px;top:33px;width:13px;height:42px;"></div>
<div class="grp" style="left:42px;top:33px;width:1855px;height:42px"><span class="a" style="left:8px;top:9.2px;line-height:26px">enemy</span></div>
<div class="hd" style="left:56px;top:77px;width:13px;height:41px;"></div>
<div class="grp" style="left:70px;top:77px;width:1827px;height:41px"><span class="a" style="left:8px;top:9.3px;line-height:26px">enemy delete</span></div>
<div class="hd" style="left:56px;top:455px;width:13px;height:42px;"></div>
<div class="grp" style="left:70px;top:455px;width:1827px;height:42px"><span class="a" style="left:8px;top:9.8px;line-height:26px">enemy attack</span></div>
<div class="hd" style="left:28px;top:889px;width:13px;height:42px;"></div>
<div class="grp" style="left:42px;top:889px;width:1855px;height:42px"><span class="a" style="left:8px;top:9.5px;line-height:26px">camera</span></div>
<div class="hd" style="left:28px;top:933px;width:13px;height:42px;"></div>
<div class="grp" style="left:42px;top:933px;width:1855px;height:42px"><span class="a" style="left:8px;top:8.8px;line-height:26px"></span></div>
</div>
</body></html>
